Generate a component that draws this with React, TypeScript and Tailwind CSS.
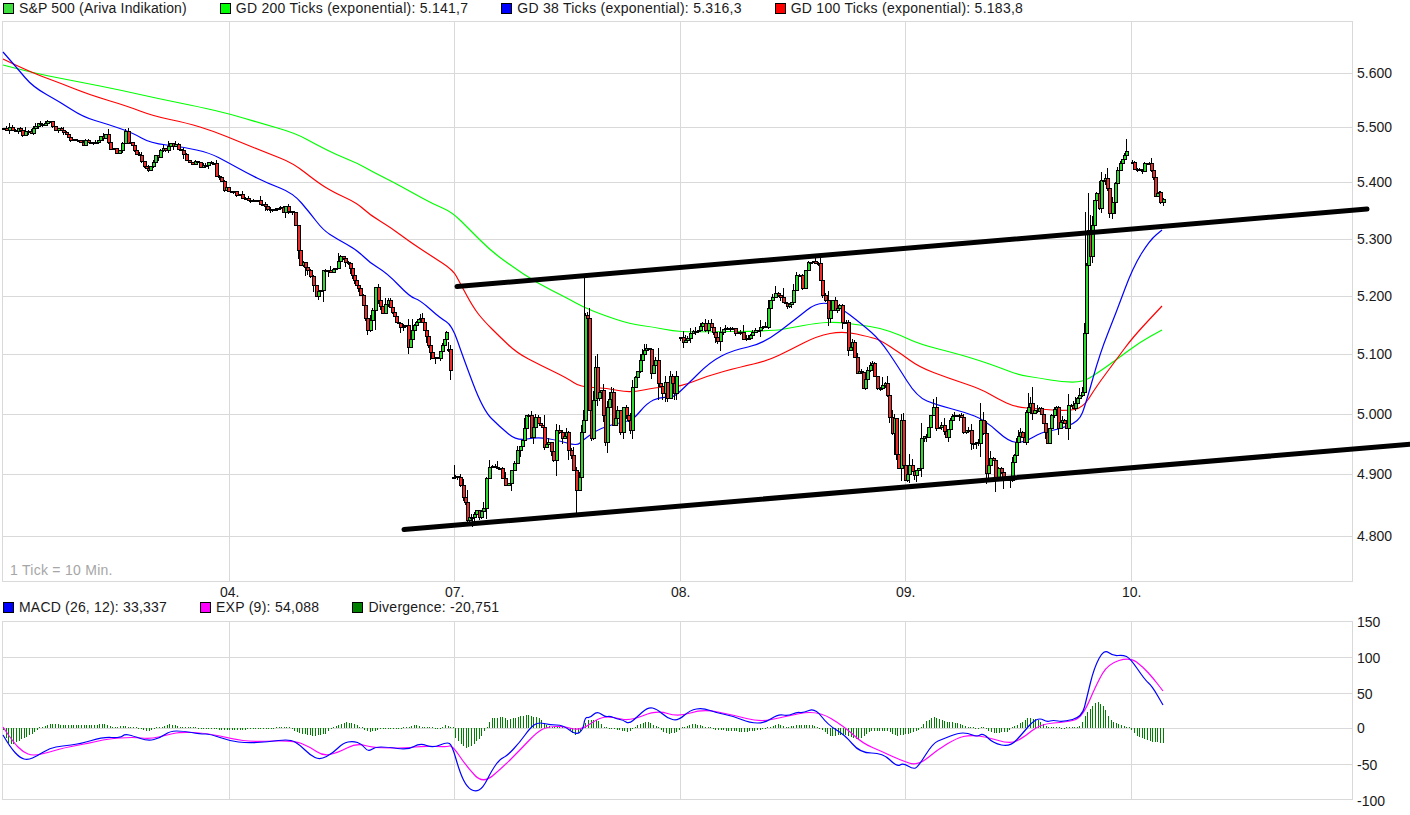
type Pt = [number, number];

const STEP = 2.6;
const GRID = '#d9d9d9';
const UP = '#2ddb2d';
const DOWN = '#ec2b2b';

const legendTop = [
  { color: 'bg-[#3ede3e]', label: 'S&P 500 (Ariva Indikation)', text: 'tracking-[0.15px]' },
  { color: 'bg-[#00ff00]', label: 'GD 200 Ticks (exponential): 5.141,7', text: 'tracking-[0.26px]' },
  { color: 'bg-[#0000ff]', label: 'GD 38 Ticks (exponential): 5.316,3', text: 'tracking-[0.26px]' },
  { color: 'bg-[#ff0000]', label: 'GD 100 Ticks (exponential): 5.183,8', text: 'tracking-[0.26px]' },
];

const legendMacd = [
  { color: 'bg-[#0000ff]', label: 'MACD (26, 12): 33,337', text: 'tracking-[0.19px]' },
  { color: 'bg-[#ff00ff]', label: 'EXP (9): 54,088', text: 'tracking-[0.27px]' },
  { color: 'bg-[#008000]', label: 'Divergence: -20,751', text: 'tracking-[0.25px]' },
];

const days: [string, number][] = [['04.', 229], ['07.', 454], ['08.', 680], ['09.', 905], ['10.', 1131]];
const priceGrid: [string, number][] = [
  ['5.600', 73], ['5.500', 127], ['5.400', 182], ['5.300', 239], ['5.200', 296],
  ['5.100', 354], ['5.000', 414], ['4.900', 474], ['4.800', 536],
];
const macdGrid: [string, number][] = [['100', 657], ['50', 693], ['0', 728], ['-50', 764]];

const green: Pt[] = [
  [3,65],[33,73],[80,82],[120,90],[160,99],[200,107],[230,114],[260,123],[295,133],[317,145],[337,155],[357,163],[373,172],[393,182],[413,193],[433,204],[452,212],[470,230],
  [490,250],[510,265],[537,283],[567,298],[583,307],[603,315],[630,324],[653,327],[673,331],[690,332],[773,331],[790,328],[817,323],[837,322],[860,325],[880,328],[900,335],[919,344],
  [958,354],[981,361],[998,367],[1019,375],[1039,378],[1062,382],[1083,382],[1096,374],[1116,360],[1140,342],[1162,330],
];
const red: Pt[] = [
  [3,59],[30,72],[60,83],[90,95],[127,106],[153,116],[187,123],[213,131],[240,142],[267,153],[293,163],[317,182],[333,192],[357,203],[370,215],[390,227],[410,242],[433,257],[453,270],
  [460,283],[473,307],[483,320],[500,337],[517,353],[540,365],[567,378],[580,387],[607,388],[630,393],[657,387],[680,387],[707,376],[740,367],[767,361],[790,350],[817,336],[843,331],[870,337],
  [880,340],[900,353],[919,367],[948,378],[981,389],[998,399],[1015,407],[1039,409],[1066,411],[1083,408],[1096,387],[1116,360],[1133,337],[1162,306],
];
const blue: Pt[] = [
  [3,52],[17,68],[33,87],[60,102],[83,117],[107,124],[133,133],[150,143],[183,147],[210,153],[227,162],[247,173],[267,183],[293,193],[310,213],[323,230],[337,239],[357,250],[370,263],
  [387,273],[410,297],[420,300],[440,318],[452,325],[463,357],[483,410],[500,427],[517,441],[537,437],[557,440],[577,446],[583,440],[600,428],[623,422],[633,420],[647,403],[660,397],[673,398],
  [687,385],[710,362],[733,350],[763,344],[797,318],[817,302],[837,305],[863,325],[880,340],[897,365],[917,397],[937,405],[964,412],[985,420],[1010,443],[1025,442],[1042,432],[1056,430],
  [1079,422],[1086,403],[1100,353],[1116,313],[1133,267],[1150,240],[1162,230],
];

// closes per trading day, split where the chart has a gap
const sessions: Pt[][] = [
  [[3,128],[12,128],[18,130],[22,134],[28,133],[33,129],[40,125],[47,123],[52,125],[58,130],[63,132],[68,137],[75,140],[80,143],[88,141],[95,140],[100,136],[105,137],[110,150],[116,151],[122,145],[125,131],[128,143],[132,145],[136,155],[141,160],[146,170],[150,168],[155,158],[160,152],[165,150],[170,142],[175,146],[180,153],[186,158],[192,162],[197,164],[200,168],[208,161],[213,165],[216,176],[221,182],[224,188],[228,190],[236,196],[245,200],[255,202],[262,205],[272,208],[280,210],[288,209],[292,212],[295,225],[298,250],[300,265],[303,262],[307,270],[313,285],[316,296],[320,290],[323,270],[330,272],[335,268],[340,256],[345,262],[350,268],[352,275],[356,285],[360,295],[363,305],[367,330],[372,310],[375,287],[378,300],[382,313],[388,300],[392,312],[396,322],[400,327],[405,325],[408,347],[412,330],[416,322],[420,318],[424,330],[428,345],[432,358],[438,358],[442,345],[446,332]],
  [[447.5,349],[450,370]],
  [[453,477],[457,477],[460,485],[463,497],[465,502],[467,520],[471,517],[476,510],[479,517],[483,508],[486,478],[489,467],[495,467],[499,468],[502,478],[505,485],[508,483],[511,470],[514,463],[517,450],[522,440],[526,415],[528,415],[531,437],[535,417],[538,423],[542,427],[544,447],[548,442],[553,460],[556,430],[562,438],[566,432],[567.5,450],[571,455],[573,470],[576,490],[579,477],[581,432],[583,420],[585,315],[587,318],[589,410],[591,438],[593,400],[595,367],[597,398],[601,390],[603,415],[605,442],[607,407],[611,392],[613,425],[617,410],[620,432],[623,407],[628,420],[630,430],[632,387],[637,371],[640,360],[644,350],[648,349],[651,373],[655,360],[658,383],[662,393],[665,382],[667,398],[670,376],[674,393],[676,376]],
  [[680,337],[683,342],[687,338],[690,333],[695,331],[698,330],[702,323],[705,330],[708,323],[713,332],[717,341],[720,332],[725,328],[732,328],[735,333],[740,332],[743,339],[748,338],[752,332],[758,330],[765,327],[768,308],[772,297],[775,293],[780,297],[783,302],[787,306],[791,302],[793,290],[796,275],[799,275],[802,288],[805,270],[808,262],[815,263],[818,263],[820,280],[822,295],[825,300],[828,318],[832,300],[835,310],[839,305],[842,322],[846,322],[848,350],[852,342],[854,357],[857,373],[861,372],[863,388],[867,370],[872,363],[874,376],[877,388],[882,385],[885,383],[887,395],[889,417],[892,433],[894,418],[896,454],[898,468],[901,420],[903,465],[905,480],[909,465],[914,475],[918,468],[921,438],[926,437],[930,415],[933,407],[936,428],[941,425],[946,437],[950,420],[954,415],[961,417],[963,432],[968,430],[971,443],[978,443],[980,420],[983,433],[986,473],[990,458],[993,460],[995,478],[998,468],[1003,480],[1009,480],[1012,462],[1014,455],[1016,442],[1020,432],[1024,442],[1026,412],[1030,403],[1032,413],[1039,408],[1043,423],[1047,443],[1051,415],[1056,407],[1058,428],[1062,420],[1066,428],[1068,405],[1073,408],[1075,403],[1079,395],[1082,392],[1084,333],[1086,265],[1088,230],[1090,256],[1092,225],[1094,200],[1096,193],[1099,208],[1101,180],[1105,178],[1107,188],[1109,213],[1112,202],[1115,183],[1117,170],[1120,163],[1124,155],[1126,151]],
  [[1132,162],[1134,169],[1142,171],[1144,163],[1149,163],[1153,177],[1155,196],[1159,192],[1160,202],[1163,199]],
];

const spikes: [number, number, number][] = [
  [584.5,278,320],[576.5,490,513],[1126.5,139,155],[1085.5,212,300],[1088.5,193,265],[995.5,478,492],[1010.5,478,488],[1032.5,387,415],[1028.5,393,412],
  [454.5,465,478],[921.5,438,450],[894.5,420,455],[472.5,517,527],
];

const macdLine: Pt[] = [
  [3,735],[10,747],[20,758],[28,760],[37,756],[50,748],[62,746],[80,744],[103,737],[120,738],[125,734],[133,736],[148,741],[160,738],[170,731],[183,731],[200,734],[210,734],[230,741],[247,743],[267,742],[290,739],[300,745],[310,755],[320,760],[333,753],[343,743],[353,741],[362,744],[368,752],[375,747],[387,747],[408,750],[420,743],[433,748],[447,742],
  [452,745],[460,773],[467,787],[475,792],[483,788],[492,770],[500,759],[507,756],[520,742],[530,728],[538,722],[550,725],[563,725],[576,735],[583,730],[585,717],[590,718],[597,711],[605,717],[610,716],[617,719],[623,720],[629,724],[637,717],[648,707],[657,709],[667,718],[678,721],[690,710],[703,708],[717,713],[733,716],[750,723],[765,723],[778,714],[788,716],[797,712],[803,713],[815,708],[828,725],[845,735],[860,753],[883,753],[897,767],
  [903,763],[913,769],[918,767],[933,743],[943,739],[958,733],[968,733],[977,737],[983,733],[993,743],[1010,747],[1023,733],[1032,722],[1040,718],[1047,722],[1053,720],[1063,722],[1082,717],[1087,697],[1094,668],[1104,649],[1113,656],[1123,655],[1130,658],[1145,680],[1152,686],[1163,705],
];
const expLine: Pt[] = [
  [3,727],[13,742],[23,752],[33,756],[50,752],[63,748],[90,743],[107,739],[133,737],[150,739],[167,735],[180,732],[207,733],[233,739],[253,742],[293,740],[310,747],[323,756],[337,753],[357,743],[373,748],[407,748],[423,746],[447,747],
  [452,745],[467,767],[483,784],[503,767],[520,750],[537,732],[547,727],[563,726],[580,731],[600,717],[613,717],[630,721],[657,710],[678,717],[703,709],[733,715],[760,722],[783,717],[817,710],[845,727],[862,743],[883,752],
  [900,760],[918,766],[937,750],[957,738],[970,735],[987,737],[1010,744],[1023,738],[1040,724],[1067,722],[1082,718],[1097,683],[1108,664],[1130,657],[1143,667],[1153,678],[1163,691],
];
const histogram: Pt[] = [
  [3,-2],[7,-15],[13,-16],[20,-12],[30,-7],[37,-2],[43,2],[50,4],[70,3],[90,3],[105,4],[112,1],[125,2],[135,0],[148,-3],[160,1],[170,4],[185,0],[230,-2],[290,0],[298,-5],[315,-8],[325,-6],[333,1],[345,6],[355,4],[365,-2],[370,-4],[380,-1],[400,-1],[415,3],[425,0],[440,-1],[445,3],
  [453,0],[455,-10],[465,-20],[473,-17],[482,-7],[487,2],[492,10],[503,11],[508,8],[520,12],[528,13],[538,10],[547,3],[555,0],[567,0],[575,-7],[580,-3],[587,8],[597,8],[600,6],[603,0],[613,-1],[629,-4],[637,3],[647,7],[655,2],[667,-6],[677,-4],[682,0],[693,4],[703,2],[717,-2],[743,-4],[760,-2],[773,2],[778,4],[787,1],[797,3],[813,3],[820,-1],[830,-8],[845,-7],[858,-12],[870,-3],[887,-3],[897,-8],
  [910,-5],[918,-2],[925,6],[933,11],[943,7],[958,5],[967,1],[975,-1],[983,0],[993,-5],[1007,-4],[1015,2],[1028,10],[1038,8],[1047,1],[1063,-1],[1080,2],[1085,13],[1097,27],[1104,21],[1110,8],[1117,4],[1130,0],[1137,-8],[1143,-11],[1153,-14],[1163,-15],
];

function smooth(pts: Pt[]) {
  let d = `M${pts[0][0]} ${pts[0][1]}`;
  for (let i = 1; i < pts.length - 1; i++) {
    const mx = (pts[i][0] + pts[i + 1][0]) / 2;
    const my = (pts[i][1] + pts[i + 1][1]) / 2;
    d += `Q${pts[i][0]} ${pts[i][1]} ${mx} ${my}`;
  }
  const last = pts[pts.length - 1];
  return `${d}L${last[0]} ${last[1]}`;
}

function interpolate(pts: Pt[], x: number) {
  for (let i = 1; i < pts.length; i++) {
    if (x <= pts[i][0]) {
      const t = (x - pts[i - 1][0]) / (pts[i][0] - pts[i - 1][0]);
      return pts[i - 1][1] + (pts[i][1] - pts[i - 1][1]) * t;
    }
  }
  return pts[pts.length - 1][1];
}

// small seeded generator, so wicks stay the same on every render
function makeRandom(seed: number) {
  let s = seed;
  return () => {
    s = (s * 16807) % 2147483647;
    return s / 2147483647;
  };
}

function buildCandles() {
  const rnd = makeRandom(4711);
  const out: { x: number; o: number; c: number; hi: number; lo: number }[] = [];
  sessions.forEach((pts) => {
    let prev = pts[0][1];
    const add = (x: number, c: number) => {
      const range = Math.min(Math.abs(c - prev), 24);
      const big = x > 300 && x < 1125 ? 1 : 0.35;
      const hi = Math.min(prev, c) - rnd() * rnd() * (3 + range * 0.25) * (1 + big * 1.4);
      const lo = Math.max(prev, c) + rnd() * rnd() * (3 + range * 0.25) * (1 + big * 1.4);
      out.push({ x: Math.round(x) + 0.5, o: prev, c, hi, lo });
      prev = c;
    };
    add(pts[0][0], pts[0][1]);
    for (let i = 1; i < pts.length; i++) {
      const [x0, y0] = pts[i - 1];
      const [x1, y1] = pts[i];
      const n = Math.max(1, Math.round((x1 - x0) / STEP));
      for (let k = 1; k <= n; k++) {
        const t = k / n;
        const x = x0 + (x1 - x0) * t;
        // the quiet stretch at the left still has visible bodies
        const spread = x < 296 ? 6 : k < n ? 3.5 : 0;
        add(x, y0 + (y1 - y0) * t + (rnd() - 0.5) * spread);
      }
    }
  });
  return out;
}

const candles = buildCandles();

const bars: { x: number; v: number }[] = [];
for (let x = 3; x <= 1163; x += STEP) {
  const v = Math.round(interpolate(histogram, x));
  bars.push({ x: Math.round(x) + 0.5, v: v === 0 ? 1 : v });
}

function Legend({ items }: { items: { color: string; label: string; text: string }[] }) {
  return (
    <div className="flex h-[17px] items-center gap-[33px] pl-[3px]">
      {items.map((item) => (
        <div key={item.label} className="flex items-center gap-[5px]">
          <span className={`block h-[11px] w-[11px] border border-black ${item.color}`} />
          <span className={`whitespace-nowrap ${item.text}`}>{item.label}</span>
        </div>
      ))}
    </div>
  );
}

function PriceChart() {
  return (
    <svg width={1410} height={578} viewBox="0 21 1410 578" className="block">
      <g stroke={GRID} shapeRendering="crispEdges">
        <rect x={2.5} y={21.5} width={1350} height={560} fill="none" />
        {priceGrid.map(([label, y]) => (
          <line key={label} x1={2} x2={1352} y1={y + 0.5} y2={y + 0.5} />
        ))}
        {days.map(([label, x]) => (
          <line key={label} x1={x + 0.5} x2={x + 0.5} y1={21} y2={581} />
        ))}
      </g>
      <path d={smooth(green)} fill="none" stroke="#00ff00" strokeWidth={1.25} />
      <path d={smooth(red)} fill="none" stroke="#ff0000" strokeWidth={1.2} />
      <path d={smooth(blue)} fill="none" stroke="#0000ff" strokeWidth={1.2} />
      <g shapeRendering="crispEdges" stroke="#000">
        {spikes.map(([x, y1, y2], i) => (
          <line key={i} x1={x} x2={x} y1={y1} y2={y2} />
        ))}
        {candles.map((c, i) => (
          <g key={i}>
            <line x1={c.x} x2={c.x} y1={c.hi} y2={c.lo} />
            <rect
              x={c.x - 1}
              y={Math.min(c.o, c.c)}
              width={3}
              height={Math.max(1, Math.abs(c.o - c.c))}
              fill={c.c < c.o ? UP : DOWN}
            />
          </g>
        ))}
      </g>
      <line x1={457} y1={286.5} x2={1367} y2={209} stroke="#000" strokeWidth={5} strokeLinecap="round" />
      <line x1={404} y1={529.5} x2={1412} y2={444} stroke="#000" strokeWidth={5} strokeLinecap="round" />
      <text x={10} y={575} fill="#a6a6a6" fontSize={14} className="tracking-[0.27px]">1 Tick = 10 Min.</text>
      <g fill="#1a1a1a" fontSize={14}>
        {priceGrid.map(([label, y]) => (
          <text key={label} x={1357} y={y + 5}>{label}</text>
        ))}
        {days.map(([label, x]) => (
          <text key={label} x={x - 9} y={597}>{label}</text>
        ))}
      </g>
    </svg>
  );
}

function MacdChart() {
  return (
    <svg width={1410} height={194} viewBox="0 621 1410 194" className="block overflow-visible">
      <g stroke={GRID} shapeRendering="crispEdges">
        <rect x={2.5} y={621.5} width={1350} height={178} fill="none" />
        {macdGrid.map(([label, y]) => (
          <line key={label} x1={2} x2={1352} y1={y + 0.5} y2={y + 0.5} />
        ))}
        {days.map(([label, x]) => (
          <line key={label} x1={x + 0.5} x2={x + 0.5} y1={621} y2={800} />
        ))}
      </g>
      <g stroke="#008000" shapeRendering="crispEdges">
        {bars.map((b, i) => (
          <line key={i} x1={b.x} x2={b.x} y1={728} y2={728 - b.v} />
        ))}
      </g>
      <path d={smooth(expLine)} fill="none" stroke="#ff00ff" strokeWidth={1.2} />
      <path d={smooth(macdLine)} fill="none" stroke="#0000ff" strokeWidth={1.2} />
      <g fill="#1a1a1a" fontSize={14}>
        <text x={1357} y={627}>150</text>
        <text x={1357} y={663}>100</text>
        <text x={1357} y={699}>50</text>
        <text x={1357} y={733}>0</text>
        <text x={1357} y={770}>-50</text>
        <text x={1357} y={806}>-100</text>
      </g>
    </svg>
  );
}

export default function App() {
  return (
    <div className="h-[815px] w-[1410px] overflow-hidden bg-white font-['Liberation_Sans',Arial,sans-serif] text-[14px] leading-[17px] text-[#1a1a1a]">
      <div className="h-[21px]">
        <Legend items={legendTop} />
      </div>
      <PriceChart />
      <div className="h-[22px]">
        <Legend items={legendMacd} />
      </div>
      <MacdChart />
    </div>
  );
}
